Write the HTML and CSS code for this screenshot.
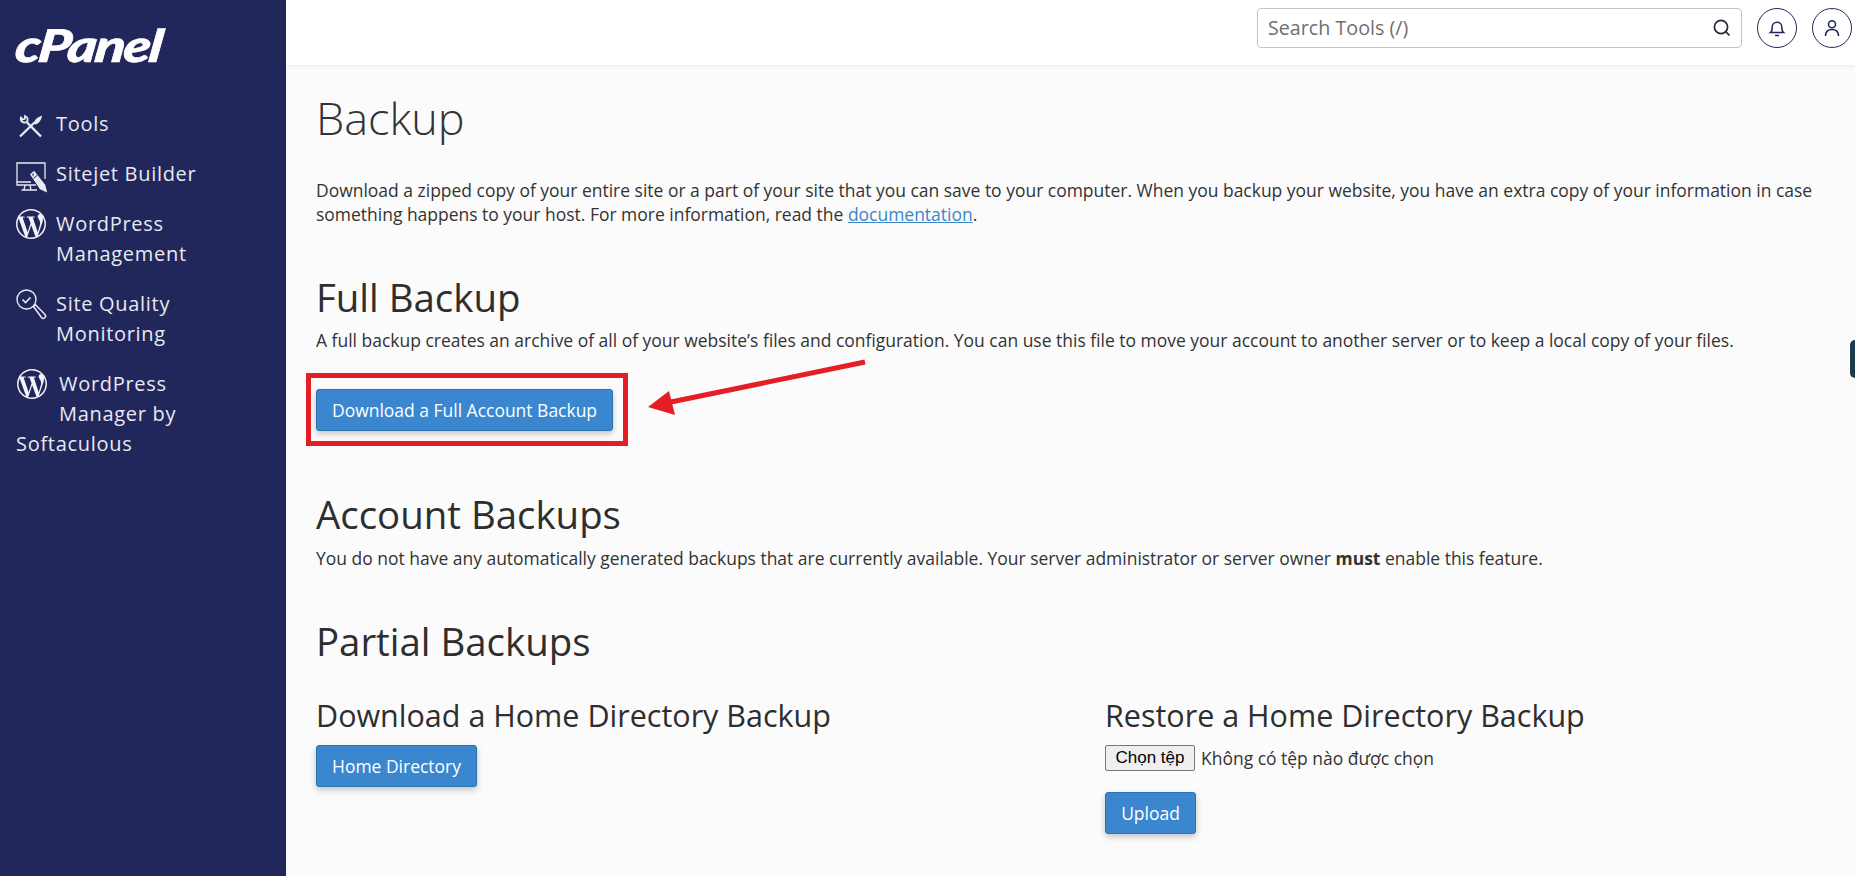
FILE: index.html
```html
<!DOCTYPE html>
<html lang="vi">
<head>
<meta charset="utf-8">
<title>Backup - cPanel</title>
<link rel="stylesheet" href="styles.css">
</head>
<body>
<svg class="defs" width="0" height="0" aria-hidden="true">
  <symbol id="wp" viewBox="0 0 24 24"><path fill="currentColor" d="M21.469 6.825c.84 1.537 1.318 3.3 1.318 5.175 0 3.979-2.156 7.456-5.363 9.325l3.295-9.527c.615-1.54.82-2.771.82-3.864 0-.405-.026-.78-.07-1.11m-7.981.105c.647-.03 1.232-.105 1.232-.105.582-.075.514-.93-.067-.899 0 0-1.755.135-2.88.135-1.064 0-2.85-.15-2.85-.15-.585-.03-.661.855-.075.885 0 0 .54.061 1.125.09l1.68 4.605-2.37 7.08L5.354 6.9c.649-.03 1.234-.1 1.234-.1.585-.075.516-.93-.065-.896 0 0-1.746.138-2.874.138-.2 0-.438-.008-.69-.015C4.911 3.15 8.235 1.215 12 1.215c2.809 0 5.365 1.072 7.286 2.833-.046-.003-.091-.009-.141-.009-1.06 0-1.812.923-1.812 1.914 0 .89.513 1.643 1.06 2.531.411.72.89 1.643.89 2.977 0 .915-.354 1.994-.821 3.479l-1.075 3.585-3.9-11.61.001.014zM12 22.784c-1.059 0-2.081-.153-3.048-.437l3.237-9.406 3.315 9.087c.024.053.05.101.078.149-1.12.393-2.325.609-3.582.609M1.211 12c0-1.564.336-3.05.935-4.39L7.29 21.709C3.694 19.96 1.212 16.271 1.211 12M12 0C5.385 0 0 5.385 0 12s5.385 12 12 12 12-5.385 12-12S18.615 0 12 0"/></symbol>
</svg>
<div class="app">
  <aside class="sidebar">
    <div class="logo"><span class="logo-text">cPanel</span></div>
    <nav class="nav">
      <a class="nav-item">
        <svg class="nav-icon" viewBox="0 0 30 30" fill="none" stroke="currentColor" stroke-width="2.4">
          <path d="M11 13.5 L25 27.5"/>
          <path d="M5 8.5 C3.8 11.5 6.8 14.6 10.6 13 C12.6 11 11.8 8 9 7 L8.8 9.8 L6.4 10.4 Z" stroke-width="1.8"/>
          <path d="M4 27.5 L19 13"/>
          <path d="M18 14.5 C18 11 21.5 8 26 6.5 C25.5 11 23 14.5 19.5 15.5 Z" fill="currentColor" stroke="none"/>
        </svg>
        Tools
      </a>
      <a class="nav-item">
        <svg class="nav-icon" viewBox="0 0 30 30" fill="none" stroke="currentColor" stroke-width="1.3">
          <path d="M15 23 H1 V4 H29 V20"/>
          <path d="M1 23 V26 H20"/>
          <path d="M9 26 L8 31 H5.5 M14 26 L15 31 H17.5 M5.5 31 H21"/>
          <path d="M15 15.5 L18 13 L28.5 26 L30 32 L24.5 29.5 Z" fill="none" stroke-width="1.6"/>
          <path d="M18 13 L28.5 26 L30 32 L24.5 29.5 L17 19 Z" fill="currentColor" stroke="none"/>
          <path d="M17.5 19.5 L21.5 16" stroke="#21275a" stroke-width="1"/>
        </svg>
        Sitejet Builder
      </a>
      <a class="nav-item">
        <svg class="nav-icon wp-icon"><use href="#wp"/></svg>
        WordPress Management
      </a>
      <a class="nav-item">
        <svg class="nav-icon" viewBox="0 0 30 30" fill="none" stroke="currentColor" stroke-width="1.4">
          <circle cx="10.5" cy="10.5" r="9.5"/>
          <path d="M6.5 10.5 L9.5 13.5 L14.5 8.5" stroke-width="1.6"/>
          <path d="M17.5 17.5 L19.5 15.8 L29 25.5 A2.3 2.3 0 0 1 25.5 28.5 Z" stroke-width="1.5"/>
        </svg>
        Site Quality Monitoring
      </a>
      <a class="nav-item nav-item-wide">
        <svg class="nav-icon wp-icon"><use href="#wp"/></svg>
        WordPress Manager by Softaculous
      </a>
    </nav>
  </aside>
  <div class="column">
    <header class="topbar">
      <div class="search">
        <span class="search-text">Search Tools (/)</span>
        <svg class="search-icon" viewBox="0 0 20 20" fill="none" stroke="currentColor" stroke-width="1.7">
          <circle cx="9" cy="9" r="6.6"/><path d="M13.7 13.7 L17.5 17.5"/>
        </svg>
      </div>
      <button class="round-btn" type="button" aria-label="Notifications">
        <svg viewBox="0 0 20 20" fill="none" stroke="currentColor" stroke-width="1.5">
          <path d="M3.5 14.5 H16.5 C15 13.5 14.8 12 14.8 9 A4.8 4.8 0 0 0 5.2 9 C5.2 12 5 13.5 3.5 14.5 Z"/><path d="M8 17.5 H12"/>
        </svg>
      </button>
      <button class="round-btn" type="button" aria-label="Account">
        <svg viewBox="0 0 20 20" fill="none" stroke="currentColor" stroke-width="1.6">
          <circle cx="10" cy="6.2" r="3.5"/><path d="M3.5 18 C3.5 13.5 6.5 11.5 10 11.5 C13.5 11.5 16.5 13.5 16.5 18"/>
        </svg>
      </button>
    </header>
    <main class="content">
      <h1 class="page-title">Backup</h1>
      <p class="intro">Download a zipped copy of your entire site or a part of your site that you can save to your computer. When you backup your website, you have an extra copy of your information in case something happens to your host. For more information, read the <a class="doc-link">documentation</a>.</p>

      <h2 class="section-title section-full">Full Backup</h2>
      <p class="section-text">A full backup creates an archive of all of your website’s files and configuration. You can use this file to move your account to another server or to keep a local copy of your files.</p>
      <div class="annotated">
        <button class="btn" type="button">Download a Full Account Backup</button>
        <span class="red-box"></span>
        <svg class="red-arrow" viewBox="0 0 225 60">
          <path d="M25 43 L219 3" stroke="#e31e24" stroke-width="5" fill="none"/>
          <polygon points="2,48 23,32 29,56" fill="#e31e24"/>
        </svg>
      </div>

      <h2 class="section-title section-account">Account Backups</h2>
      <p class="section-text section-text-account">You do not have any automatically generated backups that are currently available. Your server administrator or server owner <strong>must</strong> enable this feature.</p>

      <h2 class="section-title section-partial">Partial Backups</h2>
      <div class="partial-grid">
        <section>
          <h3 class="sub-title">Download a Home Directory Backup</h3>
          <button class="btn" type="button">Home Directory</button>
        </section>
        <section>
          <h3 class="sub-title">Restore a Home Directory Backup</h3>
          <div class="file-row">
            <span class="file-btn">Chọn tệp</span>
            <span class="file-name">Không có tệp nào được chọn</span>
          </div>
          <button class="btn btn-upload" type="button">Upload</button>
        </section>
      </div>
    </main>
  </div>
</div>
<div class="side-tab"></div>
</body>
</html>
```
FILE: styles.css
```css
* { box-sizing: border-box; }
html, body { margin: 0; height: 100%; overflow: hidden; }
body {
  font-family: "Open Sans", "Noto Sans", sans-serif;
  font-size: 17.48px;
  line-height: 24px;
  color: #333;
  background: #fbfbfb;
}
.defs { position: absolute; }
.app { display: flex; height: 876px; }

.sidebar {
  width: 286px;
  flex: none;
  background: #21275a;
  color: #e8e9f2;
  padding: 0 40px 0 16px;
}
.logo {
  height: 109px;
  padding-top: 20px;
  font-family: "Lato", sans-serif;
  font-weight: 900;
  font-style: italic;
  font-size: 45px;
  line-height: 50px;
  letter-spacing: -1.5px;
  color: #fff;
}
.logo-text {
  display: inline-block;
  transform-origin: left center;
  transform: scaleX(1.24) skewX(-6deg);
  -webkit-text-stroke: .6px #fff;
}
.nav { display: flex; flex-direction: column; gap: 20px; }
.nav-item {
  display: block;
  font-size: 20px;
  line-height: 30px;
  letter-spacing: .7px;
}
.nav-icon {
  float: left;
  width: 30px;
  height: 30px;
  margin: 0 10px .1px 0;
  overflow: visible;
}
.wp-icon { color: #f2f3f8; }
.nav-item-wide .nav-icon { margin: 0 12px .1px 1px; }

.column { flex: 1; min-width: 0; display: flex; flex-direction: column; }
.topbar {
  height: 65px;
  flex: none;
  background: #fff;
  box-shadow: 0 1px 4px rgba(0,0,0,.08);
  display: flex;
  align-items: flex-start;
  justify-content: flex-end;
  padding: 8px 3px 0 0;
  gap: 15px;
}
.search {
  width: 485px;
  height: 40px;
  border: 1px solid #c4c4c4;
  border-radius: 4px;
  display: flex;
  align-items: center;
  justify-content: space-between;
  padding: 0 9px 0 10px;
  background: #fff;
}
.search-text { font-size: 19.7px; color: #6f6f6f; }
.search-icon { width: 20px; height: 20px; color: #222a3a; }
.round-btn {
  width: 40px;
  height: 40px;
  padding: 9px;
  border: 1px solid #21275a;
  border-radius: 50%;
  background: #fff;
  color: #21275a;
  display: flex;
}
.round-btn svg { width: 100%; height: 100%; }

.content { padding: 0 20px 0 30px; }
.page-title {
  margin: 23px 0 0;
  font-weight: 300;
  font-size: 45px;
  line-height: 60px;
  color: #333;
}
.intro { margin: 30px 0 0; }
.doc-link { color: #3a87c8; text-decoration: underline; }
.section-title {
  margin: 0;
  font-weight: 400;
  font-size: 38.4px;
  line-height: 46px;
  color: #2e2e2e;
}
.section-full { margin-top: 48px; }
.section-account { margin-top: 60px; }
.section-partial { margin-top: 48px; }
.section-text { margin: 8px 0 0; }
.section-text-account { margin-top: 9px; }
.annotated { display: inline-block; position: relative; margin-top: 37px; vertical-align: top; }
.btn {
  display: block;
  height: 42px;
  padding: 0 15px;
  border: 1px solid #2f72b0;
  border-radius: 3px;
  background: #3a87d0;
  color: #fff;
  font: inherit;
  box-shadow: 0 3px 6px rgba(0,0,0,.22);
}
.red-box {
  position: absolute;
  top: -16px;
  left: -10px;
  right: -15px;
  bottom: -15px;
  border: 5px solid #e31e24;
}
.red-arrow {
  position: absolute;
  left: 330px;
  top: -30px;
  width: 225px;
  height: 60px;
}
.partial-grid {
  display: grid;
  grid-template-columns: 789px 1fr;
  margin-top: 31px;
}
.sub-title {
  margin: 0;
  font-weight: 400;
  font-size: 30.5px;
  line-height: 40px;
  color: #2e2e2e;
}
.partial-grid .btn { margin-top: 10px; }
.file-row { display: flex; align-items: center; gap: 6px; margin-top: 10px; height: 26px; }
.file-btn {
  width: 90px;
  height: 26px;
  border: 1px solid #767676;
  border-radius: 2px;
  background: #efefef;
  color: #000;
  font-family: "Liberation Sans", Arial, sans-serif;
  font-size: 17px;
  line-height: 24px;
  text-align: center;
}
.file-name { color: #333; }
.partial-grid .btn-upload { margin-top: 21px; width: 91px; padding: 0; }
.side-tab {
  position: absolute;
  right: 0;
  top: 340px;
  width: 5px;
  height: 38px;
  background: #1f3a4d;
  border-radius: 5px 0 0 5px;
}
```
